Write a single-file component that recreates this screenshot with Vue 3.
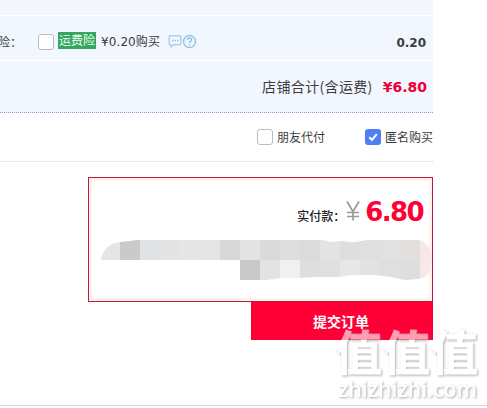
<script setup>
const upper = [
  [100, '#e5e5e5'], [120, '#cbcacb'], [140, '#e1e2e4'], [160, '#e4e4e4'], [180, '#e6e6e6'],
  [200, '#e5e5e5'], [220, '#d8d8d8'], [240, '#e4e4e4'], [260, '#dadada'], [280, '#dedede'],
  [300, '#dbdbdb'], [320, '#e3e3e3'], [340, '#dedede'], [360, '#e0e0e0'], [380, '#e1e1e1'],
  [400, '#e1e0df'], [420, '#f7e7e9'],
]
const lower = [
  [240, '#cac9ca'], [260, '#e3e3e3'], [280, '#f0f0f0'], [300, '#dedede'], [320, '#e0e0e0'],
  [340, '#e7e7e7'], [360, '#e2e2e2'], [380, '#dfdfdf'], [400, '#dedede'], [420, '#f8e8ea'],
]
</script>

<template>
  <main class="page">
    <section class="order">
      <div class="strip"></div>
      <div class="insurance">
        <span class="prefix">险：</span>
        <i class="box"></i>
        <span class="tag">运费险</span>
        <span class="buy">¥0.20购买</span>
        <svg class="hints" width="29" height="15" viewBox="0 0 29 15" fill="none">
          <path d="M2.5 1.8H11.5Q12.8 1.8 12.8 3V9.5Q12.8 10.8 11.5 10.8H5.5L3 13V10.8H2.5Q1.2 10.8 1.2 9.5V3Q1.2 1.8 2.5 1.8Z" stroke="#a5d2ec" stroke-width="1.4" />
          <path d="M4 6.5H5.5M6.5 6.5H8M9 6.5H10.5" stroke="#91c6e6" stroke-width="1.4" />
          <circle cx="21.5" cy="7.5" r="6" stroke="#90c8e9" stroke-width="1.5" />
          <path d="M19.4 6C19.4 3.1 23.8 3.3 23.6 5.8C23.5 7.2 21.5 7.2 21.5 9M21.5 10V11.3" stroke="#83bee2" stroke-width="1.3" />
        </svg>
        <b class="fee">0.20</b>
      </div>
      <div class="total">
        <span class="total-label">店铺合计(含运费)</span>
        <b class="total-price">¥6.80</b>
      </div>
      <div class="options">
        <i class="box"></i>
        <span class="friend">朋友代付</span>
        <i class="box checked">
          <svg width="16" height="16" viewBox="0 0 16 16"><path d="M4.2 8.2L7 10.8L11.8 5.2" fill="none" stroke="#fff" stroke-width="2" /></svg>
        </i>
        <span class="anonymous">匿名购买</span>
      </div>
    </section>

    <section class="payment">
      <div class="pay-line">
        <span class="pay-label">实付款：</span>
        <svg class="yen" width="14" height="20" viewBox="0 0 14 20">
          <path d="M1 0.5L7 10.5L13 0.5M7 10.5V19.5M1 11.5H13M1 15.5H13" fill="none" stroke="#999" stroke-width="1.7" />
        </svg>
        <b class="amount">6.80</b>
      </div>
      <svg class="mosaic" width="333" height="41" viewBox="100 239 333 41">
        <defs>
          <clipPath id="smear">
            <path d="M101 260C102 251 109 243 120 242L130 241L137 240H323L331 242L341 241L350 242H356L367 240H419C426 242 432 248 432 260C432 270 427 278 419 279L405 280L391 277L375 275H351L339 277H315L300 278H280L274 279L266 280H240V260Z" />
          </clipPath>
        </defs>
        <g clip-path="url(#smear)">
          <rect v-for="[x, color] in upper" :key="'u' + x" :x="x" y="240" width="20" height="20" :fill="color" />
          <rect v-for="[x, color] in lower" :key="'l' + x" :x="x" y="260" width="20" height="20" :fill="color" />
        </g>
      </svg>
    </section>
    <button class="submit">提交订单</button>

    <svg class="watermark" width="157" height="84" viewBox="330 322 157 84">
      <text class="hanzi" x="335" y="370" textLength="143">值值值</text>
      <text class="domain" x="338" y="397" textLength="139" lengthAdjust="spacingAndGlyphs">zhizhizhi.com</text>
    </svg>
    <div class="rule"></div>
  </main>
</template>

<style>
body { margin: 0; background: #fff; }
</style>

<style scoped>
.page {
  position: relative;
  box-sizing: border-box;
  width: 487px;
  height: 408px;
  overflow: hidden;
  display: flex;
  flex-direction: column;
  background: #fff;
  color: #3c3c3c;
  font: 12px/16px "DejaVu Sans", "Noto Sans CJK SC", sans-serif;
}
.page span, .page b { white-space: nowrap; }
.order { width: 433px; }
.strip, .insurance, .total { background: #f1f6ff; }
.strip { height: 15px; border-bottom: 1px solid #fff; }
.insurance {
  display: flex;
  align-items: center;
  box-sizing: border-box;
  height: 45px;
  padding: 7px 7px 0 0;
  border-bottom: 1px solid #fff;
}
.prefix { width: 38px; margin-left: -2px; font-family: "Noto Sans CJK SC", sans-serif; }
.box {
  box-sizing: border-box;
  flex: none;
  width: 16px;
  height: 16px;
  border: 1px solid #bbbcc5;
  border-radius: 3px;
  background: #fff;
}
.insurance .box { margin-left: 2px; }
.tag {
  width: 38px;
  height: 17px;
  margin: -2px 0 0 4px;
  line-height: 18px;
  text-align: center;
  color: #e9fff0;
  background: #35a55f;
}
.buy { margin-left: 5px; letter-spacing: 0.1px; }
.hints { margin-left: 8px; }
.fee { margin: 2px 0 0 auto; }
.total {
  display: flex;
  align-items: center;
  justify-content: flex-end;
  box-sizing: border-box;
  height: 52px;
  padding: 0 6px 0 0;
  border-bottom: 1px dotted #8fa0d0;
}
.total-label { margin-top: -1px; font: 14px/20px "Noto Sans CJK SC", sans-serif; letter-spacing: 0.35px; }
.total-price { margin-left: 10px; font-size: 14px; color: #e90039; }
.options {
  display: flex;
  align-items: center;
  justify-content: flex-end;
  box-sizing: border-box;
  height: 49px;
  border-bottom: 1px dotted #d8d8d8;
}
.friend { margin: 2px 40px 0 4px; }
.anonymous { margin: 2px 0 0 4px; }
.checked { border: 0; background: #507ff5; }
.checked svg { display: block; }
.payment {
  box-sizing: border-box;
  width: 345px;
  height: 125px;
  margin: 15px 0 0 88px;
  border: 1px solid #ba1a43;
  box-shadow: inset 0 0 0 3px #fff0eb;
}
.pay-line {
  display: flex;
  align-items: baseline;
  justify-content: flex-end;
  height: 45px;
  padding: 16px 9px 0 0;
}
.pay-label { font: 500 12px/36px "Noto Sans CJK SC", sans-serif; color: #222; }
.yen { flex: none; margin: 0 5px 0 1px; }
.amount { font: bold 26px/36px "DejaVu Sans", sans-serif; letter-spacing: -1.6px; color: #ff0036; }
.mosaic { display: block; margin: 0 0 0 11px; }
.submit {
  width: 182px;
  height: 38px;
  flex: none;
  margin-left: 251px;
  padding: 0 2px 0 0;
  border: 0;
  background: #ff0036;
  color: #fff;
  font: bold 14px/36px "Noto Sans CJK SC", sans-serif;
}
.watermark {
  position: absolute;
  left: 330px;
  top: 322px;
  opacity: .62;
  filter: drop-shadow(1px 1px .8px #777);
}
.hanzi { font: bold 47px "Noto Sans CJK SC", sans-serif; fill: #fff; stroke: #fff; stroke-width: .8px; }
.domain { font: 600 22px "Open Sans", sans-serif; fill: #fff; }
.rule { height: 1px; margin-top: 65px; background: #d5d5d5; }
</style>
